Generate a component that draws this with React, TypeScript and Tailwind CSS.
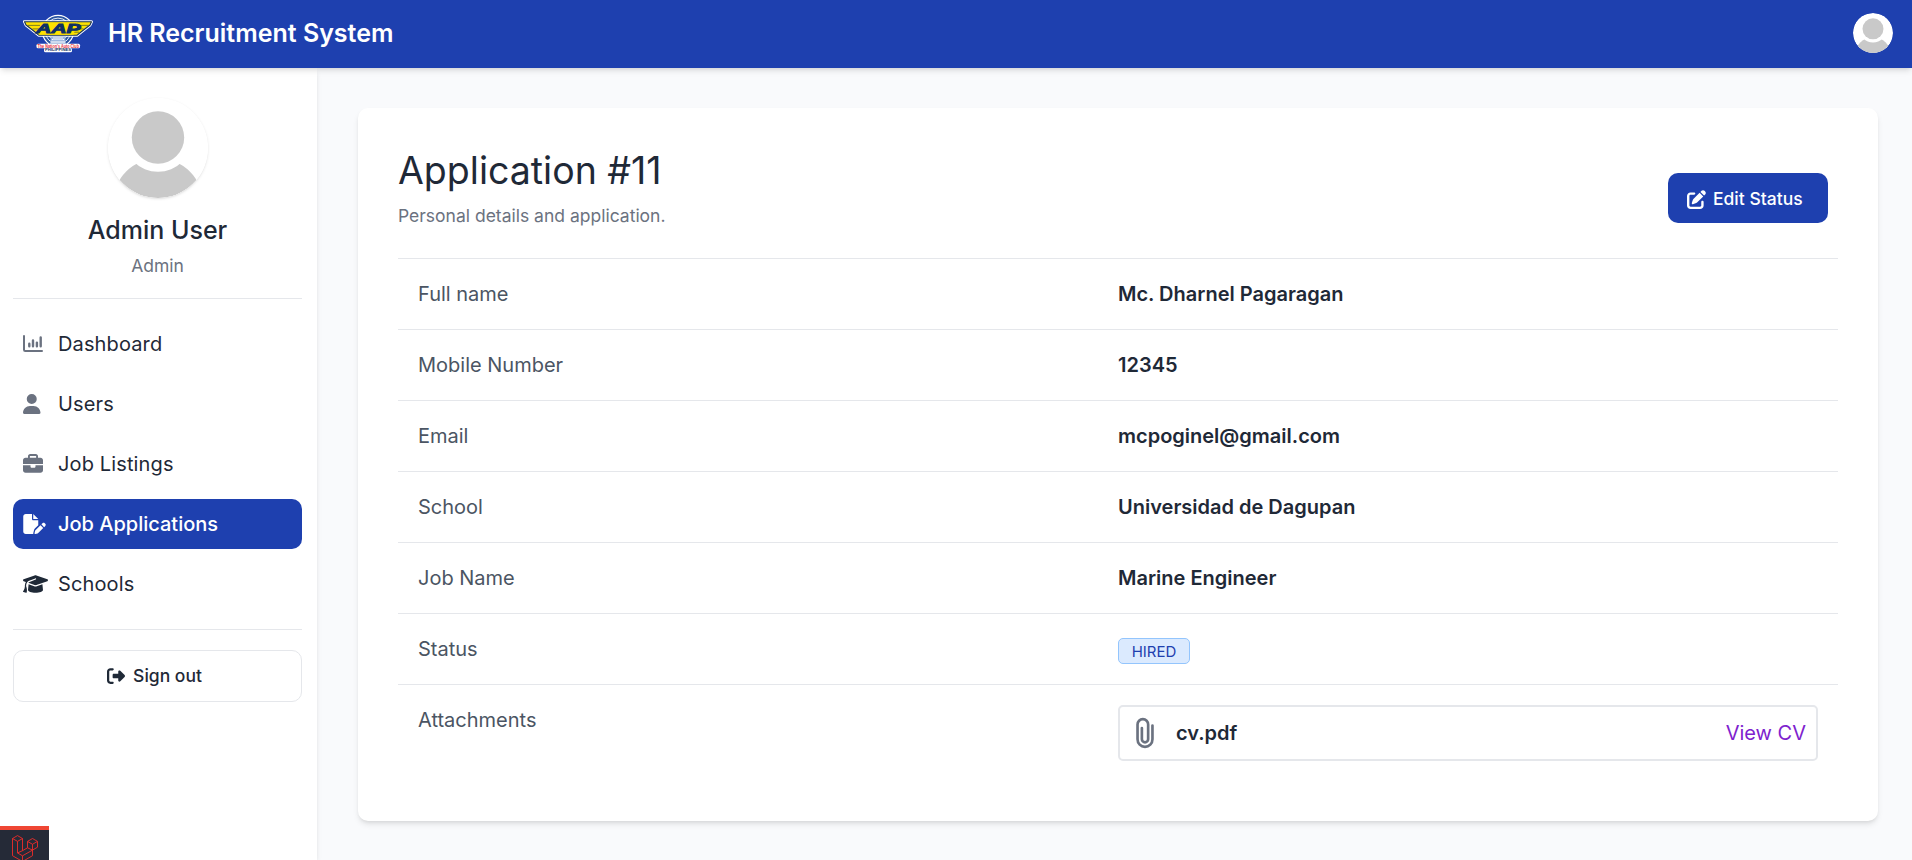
import type { ReactNode } from "react";
import { FaBriefcase, FaFilePen, FaGraduationCap, FaPenToSquare, FaRightFromBracket, FaUser } from "react-icons/fa6";
import { IoAttach } from "react-icons/io5";

function Logo() {
  const wings = "M1.500 7.700H68.500L67 11 60.500 16 54 21.300H16L9.500 16 3 11z";
  return (
    <svg viewBox="0 0 70 39" className="h-[39px] w-[70px]" aria-hidden="true">
      <circle cx="35" cy="17" r="15.700" fill="#2a55a0" stroke="#fff" strokeWidth="1.200" />
      <circle cx="35" cy="17" r="12.900" fill="none" stroke="#e6edf8" strokeWidth="1" />
      <circle cx="35" cy="17" r="10.200" fill="#1e4d8f" stroke="#dbe6f5" strokeWidth="1" />
      <path d="M28 23h14l1 7H27z" fill="#9db8dd" />
      <path d="M29 25.500h12M28 28h14" stroke="#fff" strokeWidth="1" />
      <path d={wings} fill="#fff" stroke="#fff" strokeWidth="3" strokeLinejoin="round" />
      <path d={wings} fill="#fde100" stroke="#14305f" strokeWidth="1.100" strokeLinejoin="round" />
      <path d="M4.500 11.400h61M9.500 14.900h51M14 18.200h42" stroke="#5a6428" strokeWidth=".8" />
      <path d="M17.500 8.500h37l-4 12.200h-35z" fill="#fde100" />
      <text x="13" y="19.200" textLength="44.500" lengthAdjust="spacingAndGlyphs" fontFamily="Liberation Sans, sans-serif" fontSize="13" fontWeight="bold" fontStyle="italic" fill="#0e2f66" stroke="#0e2f66" strokeWidth=".9">AAP</text>
      <path d="M30 22.800h10v3H30z" fill="#c5d3e8" />
      <rect x="13.500" y="29.700" width="43.500" height="4.500" rx="1.500" fill="#fff" />
      <text x="14.500" y="33.700" textLength="41.500" lengthAdjust="spacingAndGlyphs" fontFamily="Liberation Sans, sans-serif" fontSize="4.800" fontWeight="bold" fill="#e53040">The Nation's Auto Club</text>
      <rect x="21" y="34" width="28" height="4.200" rx="1.500" fill="#fff" />
      <text x="22" y="37.400" textLength="26" lengthAdjust="spacingAndGlyphs" fontFamily="Liberation Sans, sans-serif" fontSize="4" fontWeight="bold" fill="#12305f">PHILIPPINES</text>
    </svg>
  );
}

function Avatar({ id, className }: { id: string; className: string }) {
  return (
    <svg viewBox="0 0 100 100" className={className} aria-hidden="true">
      <defs>
        <clipPath id={id}>
          <circle cx="50" cy="50" r="50" />
        </clipPath>
      </defs>
      <g clipPath={`url(#${id})`}>
        <rect width="100" height="100" fill="#fff" />
        <circle cx="50" cy="105.400" r="45" fill="#c9c9c9" />
        <circle cx="50" cy="39.500" r="34.300" fill="#fff" />
        <circle cx="50" cy="39.500" r="26.200" fill="#c9c9c9" />
      </g>
    </svg>
  );
}

function ChartIcon() {
  return (
    <svg viewBox="0 0 20 18" className="h-[18px] w-5" fill="none" stroke="currentColor" strokeLinecap="round" aria-hidden="true">
      <path d="M1 1v13.800c0 .8.400 1.200 1.200 1.200h16.800" strokeWidth="2" strokeLinejoin="round" />
      <path d="M6.300 8.800v2.500M10 5.500v5.800M13.900 7.600v3.700M17.700 2.500v8.800" strokeWidth="2.400" />
    </svg>
  );
}

function LaravelIcon() {
  return (
    <svg viewBox="0 0 26 27" className="h-[27px] w-[26px]" fill="none" stroke="#ee2d2a" strokeWidth=".9" strokeLinejoin="round" aria-hidden="true">
      <path d="M.5 3.500 5.500.6l5 2.900v12.200l5-2.900V6.400l5-2.900 5 2.900v5.800l-5 2.900v5.600l-10 5.800-10-5.800z" />
      <path d="m.5 3.500 5 2.900 5-2.900M5.500 6.400v11.500l5 2.900 10-5.700V9.300l5-2.900M15.500 6.400l5 2.900M15.500 12.800l5 2.300M5.500 17.900l5-2.200M10.500 20.800v5.700" />
    </svg>
  );
}

interface NavEntry {
  label: string;
  icon: ReactNode;
  active?: boolean;
  dark?: boolean;
}

const navigation: NavEntry[] = [
  { label: "Dashboard", icon: <ChartIcon /> },
  { label: "Users", icon: <FaUser className="h-5 w-[17.5px]" /> },
  { label: "Job Listings", icon: <FaBriefcase className="size-5" /> },
  { label: "Job Applications", icon: <FaFilePen className="h-5 w-[23px]" />, active: true },
  { label: "Schools", icon: <FaGraduationCap className="h-5 w-[25px]" />, dark: true },
];

function NavItem({ label, icon, active, dark }: NavEntry) {
  const iconColor = active ? "text-white" : dark ? "text-[#1f2937]" : "text-[#6b7280]";
  return (
    <a href="#" className={`flex h-[50px] items-center rounded-[10px] pl-[10px] text-[20px] ${active ? "bg-[#1e40af] font-medium text-white" : "tracking-[0.13px] text-[#1f2937]"}`}>
      <span className={`flex w-[35px] shrink-0 items-center ${iconColor}`}>{icon}</span>
      <span>{label}</span>
    </a>
  );
}

function Row({ label, children }: { label: string; children: ReactNode }) {
  return (
    <div className="grid h-[71px] grid-cols-2 border-t border-[#e5e7eb] px-5 pt-5 text-[20px] leading-[30px]">
      <dt className="text-[#4b5563]">{label}</dt>
      <dd className="font-semibold text-[#1f2937]">{children}</dd>
    </div>
  );
}

export default function App() {
  return (
    <div className="flex h-[860px] flex-col overflow-hidden bg-[#f9fafc] font-['Inter',sans-serif] text-[#1f2937]">
      <header className="z-20 flex h-[68px] shrink-0 items-center justify-between bg-[#1e40af] pr-[19px] pl-[23px] pb-[2px] shadow-md">
        <div className="flex items-center gap-[15px]">
          <Logo />
          <span className="pt-[2px] text-[25px] font-semibold text-white">HR Recruitment System</span>
        </div>
        <Avatar id="avatar-small" className="size-10 rounded-full" />
      </header>

      <div className="flex min-h-0 flex-1">
        <aside className="relative z-10 flex w-[317px] shrink-0 flex-col bg-white pr-[15px] pl-[13px] shadow-md">
          <div className="flex h-[231px] flex-col items-center border-b border-[#e5e7eb] pt-[30px]">
            <Avatar id="avatar-large" className="size-[100px] rounded-full shadow-sm" />
            <h2 className="mt-3 text-[25px] leading-10 font-medium">Admin User</h2>
            <p className="mt-[3px] text-[17.5px] leading-[25px] text-[#6b7280]">Admin</p>
          </div>
          <nav className="flex flex-col gap-[10px] border-b border-[#e5e7eb] pt-5 pb-5">
            {navigation.map((entry) => (
              <NavItem key={entry.label} {...entry} />
            ))}
          </nav>
          <button className="mt-5 flex h-[52px] items-center justify-center gap-2 rounded-[10px] border border-[#e5e7eb] pr-[6px] text-[17.5px] font-medium">
            <FaRightFromBracket className="size-[18px]" />
            Sign out
          </button>
          <div className="absolute bottom-0 left-0 flex h-[34px] w-[49px] justify-center overflow-hidden border-t-4 border-[#ef4634] bg-[#252a37] pt-[5px]">
            <LaravelIcon />
          </div>
        </aside>

        <main className="flex-1 px-[41px] pt-10 pr-[34px]">
          <section className="flex h-[713px] flex-col rounded-[10px] bg-white px-10 pt-10 shadow-md">
            <div className="flex h-[110px] shrink-0 items-start justify-between pr-[10px]">
              <div>
                <h1 className="text-[37.5px] leading-[45px]">Application #11</h1>
                <p className="mt-[10px] text-[17.5px] leading-[25px] text-[#6b7280]">Personal details and application.</p>
              </div>
              <button className="mt-[25px] flex h-[50px] w-40 items-center gap-[7px] rounded-[10px] bg-[#1e40af] pt-[2px] pl-[19px] text-[17.5px] font-medium text-white">
                <FaPenToSquare className="size-[19px]" />
                Edit Status
              </button>
            </div>
            <dl>
              <Row label="Full name">Mc. Dharnel Pagaragan</Row>
              <Row label="Mobile Number">12345</Row>
              <Row label="Email">mcpoginel@gmail.com</Row>
              <Row label="School">Universidad de Dagupan</Row>
              <Row label="Job Name">Marine Engineer</Row>
              <Row label="Status">
                <span className="mt-1 flex h-[26px] w-[72px] items-center justify-center rounded-[5px] border border-[#93c5fd] bg-[#dbeafe] pt-px text-[15px] font-normal text-[#1e40af]">HIRED</span>
              </Row>
              <Row label="Attachments">
                <div className="flex h-14 items-center rounded-[5px] border-2 border-[#e5e7eb] pr-[10px] pl-1">
                  <IoAttach className="ml-px size-10 shrink-0 text-[#6b7280] [&_path]:stroke-[34px]" />
                  <span className="ml-[11px]">cv.pdf</span>
                  <a href="#" className="ml-auto font-normal text-[#7e22ce]">View CV</a>
                </div>
              </Row>
            </dl>
          </section>
        </main>
      </div>
    </div>
  );
}
